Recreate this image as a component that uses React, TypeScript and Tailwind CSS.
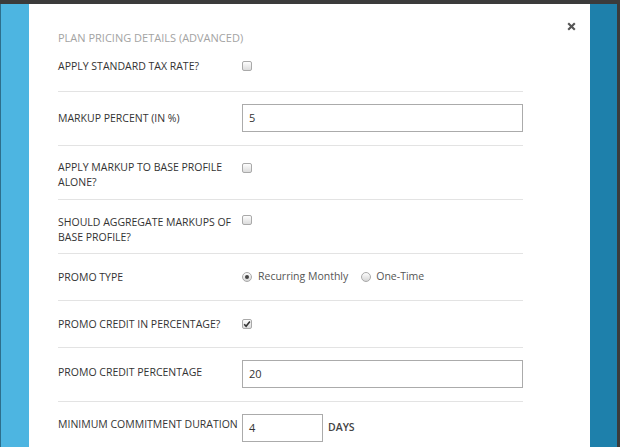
import React from "react"

const font = { fontFamily: '"Open Sans", "Noto Sans", sans-serif' }

function Check({ checked }: { checked?: boolean }) {
  return (
    <span className="flex h-[10px] w-[10px] items-center justify-center rounded-[2px] border border-[#a9a9a9] bg-gradient-to-b from-[#fdfdfd] to-[#dcdcdc]">
      {checked && (
        <svg width="8" height="8" viewBox="0 0 8 8">
          <path d="M1.2 4.3 L3.1 6.2 L6.9 1.6" fill="none" stroke="#333" strokeWidth="1.6" />
        </svg>
      )}
    </span>
  )
}

function Radio({ checked }: { checked?: boolean }) {
  return (
    <span className="flex h-[10px] w-[10px] items-center justify-center rounded-full border border-[#a9a9a9] bg-gradient-to-b from-[#fdfdfd] to-[#d6d6d6]">
      {checked && <span className="h-[4px] w-[4px] rounded-full bg-[#444]" />}
    </span>
  )
}

function Row({
  label,
  children,
  className,
  labelClass = "",
  alignTop,
}: {
  label: React.ReactNode
  children: React.ReactNode
  className: string
  labelClass?: string
  alignTop?: boolean
}) {
  return (
    <div className={`flex border-t border-[#e3e3e3] ${alignTop ? "items-start" : "items-center"} ${className}`}>
      <div className={`w-[184px] shrink-0 whitespace-nowrap text-[10.5px] leading-[15px] text-[#333] ${labelClass}`}>{label}</div>
      <div className="flex flex-1 items-center">{children}</div>
    </div>
  )
}

function TextBox({ value, className }: { value: string; className: string }) {
  return (
    <div className={`flex h-[28px] items-center border border-[#ababab] bg-white pl-[6px] text-[11px] text-[#333] ${className}`}>
      {value}
    </div>
  )
}

export default function App() {
  return (
    <div className="flex h-[447px] w-[620px] flex-col overflow-hidden bg-[#3b3b3b]" style={font}>
      <div className="h-[4px] shrink-0 bg-[#3b3b3b]" />
      <div className="flex flex-1">
        <div className="w-[29px] shrink-0 border-l border-[#2d6f8c] bg-[#4db5e1]" />
        <div className="relative flex-1 bg-white pl-[29px]">
          <button className="absolute right-[14px] top-[18px] leading-none">
            <svg width="9" height="9" viewBox="0 0 9 9">
              <path d="M1.2 1.2 L7.8 7.8 M7.8 1.2 L1.2 7.8" stroke="#555" strokeWidth="2.1" />
            </svg>
          </button>
          <div className="w-[465px]">
            <div className="pt-[26px] text-[11px] leading-[15px] text-[#a3a3a3]">PLAN PRICING DETAILS (ADVANCED)</div>
            <div className="flex h-[46px] items-start pt-[14px]">
              <div className="w-[184px] shrink-0 text-[10.5px] leading-[15px] text-[#333]">APPLY STANDARD TAX RATE?</div>
              <div className="pt-[2px]">
                <Check />
              </div>
            </div>
            <Row label="MARKUP PERCENT (IN %)" className="h-[54px] pt-[12px]" labelClass="leading-[28px]" alignTop>
              <TextBox value="5" className="w-full" />
            </Row>
            <Row label={<>APPLY MARKUP TO BASE PROFILE<br />ALONE?</>} className="h-[54px] pt-[14px]" alignTop>
              <div className="pt-[3px]">
                <Check />
              </div>
            </Row>
            <Row label={<>SHOULD AGGREGATE MARKUPS OF<br />BASE PROFILE?</>} className="h-[54px] pt-[15px]" alignTop>
              <div className="pt-[0px]">
                <Check />
              </div>
            </Row>
            <Row label="PROMO TYPE" className="h-[47px]">
              <div className="flex items-center text-[10.5px] text-[#555]">
                <Radio checked />
                <span className="ml-[6px]">Recurring Monthly</span>
                <span className="ml-[13px]">
                  <Radio />
                </span>
                <span className="ml-[5px]">One-Time</span>
              </div>
            </Row>
            <Row label="PROMO CREDIT IN PERCENTAGE?" className="h-[47px]">
              <Check checked />
            </Row>
            <Row label="PROMO CREDIT PERCENTAGE" className="h-[54px] pt-[12px]" labelClass="leading-[24px]" alignTop>
              <TextBox value="20" className="w-full" />
            </Row>
            <Row label="MINIMUM COMMITMENT DURATION" className="h-[54px] pt-[12px]" labelClass="leading-[20px]" alignTop>
              <TextBox value="4" className="w-[81px]" />
              <span className="ml-[5px] text-[10.5px] font-semibold text-[#444]">DAYS</span>
            </Row>
          </div>
        </div>
        <div className="w-[27px] shrink-0 bg-[#1e80ab]" />
        <div className="w-[3px] shrink-0 bg-[#3b3b3b]" />
      </div>
    </div>
  )
}
